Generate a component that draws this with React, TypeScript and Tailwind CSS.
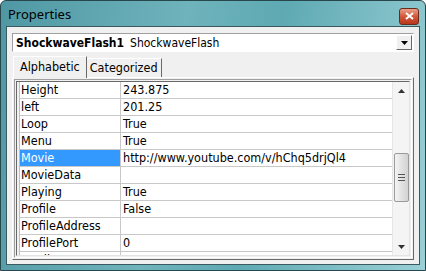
import React from "react";

const rows: [string, string][] = [
  ["Height", "243.875"],
  ["left", "201.25"],
  ["Loop", "True"],
  ["Menu", "True"],
  ["Movie", "http://www.youtube.com/v/hChq5drjQl4"],
  ["MovieData", ""],
  ["Playing", "True"],
  ["Profile", "False"],
  ["ProfileAddress", ""],
  ["ProfilePort", "0"],
  ["Quality", "1"],
];

export default function App() {
  const font = { fontFamily: '"DejaVu Sans Condensed", "DejaVu Sans", Verdana, sans-serif' };
  return (
    <div
      className="w-[426px] h-[271px] overflow-hidden rounded-t-[6px] border border-[#27474d] bg-[linear-gradient(100deg,#4f98a3_0%,#6fb3bc_40%,#5ea9b3_60%,#9ad0d6_100%)] flex flex-col"
      style={font}
    >
      {/* Title bar */}
      <div className="h-[25px] flex items-center justify-between pl-[7px] pr-[6px] shrink-0">
        <span className="text-[13px] text-black mt-[2px]" style={{ fontFamily: '"Noto Sans", "DejaVu Sans", sans-serif' }}>
          Properties
        </span>
        <div className="w-[20px] h-[17px] mt-[5px] rounded-[3px] border border-[#6b2a1c] bg-[linear-gradient(#e9a08a,#d2583a_50%,#b8361c)] flex items-center justify-center">
          <svg width="9" height="8" viewBox="0 0 9 8">
            <path d="M1 1 L8 7 M8 1 L1 7" stroke="#fff" strokeWidth="2" />
          </svg>
        </div>
      </div>
      {/* Client */}
      <div className="mx-[5px] mb-[5px] flex-1 border border-[#3a5a60] bg-[#f0f0f0] flex flex-col px-[5px] pt-[6px] pb-[4px] min-h-0">
        {/* Combo */}
        <div className="h-[19px] border-t border-l border-[#a0a0a0] border-b border-r border-b-white border-r-white bg-white flex items-center shrink-0">
          <div className="flex-1 flex items-center pl-[3px] text-[12px] leading-none">
            <span className="font-bold">ShockwaveFlash1</span>
            <span className="ml-[6px]">ShockwaveFlash</span>
          </div>
          <div className="w-[16px] h-[15px] mr-[1px] bg-[#f0f0f0] border border-t-white border-l-white border-b-[#696969] border-r-[#696969] flex items-center justify-center">
            <svg width="7" height="4" viewBox="0 0 7 4">
              <path d="M0 0 H7 L3.5 4 Z" fill="#000" />
            </svg>
          </div>
        </div>
        {/* Tabs */}
        <div className="flex items-end h-[24px] pl-[1px] shrink-0 mt-[1px]">
          <div className="h-[22px] px-[6px] flex items-center text-[12.5px] border-t border-l border-white border-r border-r-[#696969] bg-[#f0f0f0] relative z-10 -mb-[1px]">
            Alphabetic
          </div>
          <div className="h-[19px] px-[3px] flex items-center text-[12.5px] border-t border-white border-r border-r-[#696969] bg-[#f0f0f0]">
            Categorized
          </div>
        </div>
        {/* Grid */}
        <div className="flex-1 min-h-0 border-t border-l border-white border-r border-b border-r-[#696969] border-b-[#696969] p-[1px]">
          <div className="h-full border border-[#a0a0a0] border-b-white border-r-white p-[1px]">
            <div className="h-full border border-[#696969] border-b-[#e3e3e3] border-r-[#e3e3e3] flex bg-white overflow-hidden">
              <div className="flex-1 overflow-hidden flex">
                <div className="w-[3px] bg-[#f0f0f0] border-r border-[#c0c0c0]" />
                <div className="flex-1">
                  {rows.map(([n, v]) => (
                    <div key={n} className="h-[17px] flex border-b border-[#c8c8c8] text-[12.5px] leading-none">
                      <div
                        className={
                          "w-[101px] border-r border-[#c8c8c8] flex items-center pl-[1px] " +
                          (n === "Movie" ? "bg-[#3399ff] text-white" : "text-black")
                        }
                      >
                        {n}
                      </div>
                      <div className="flex-1 flex items-center pl-[2px] text-black">{v}</div>
                    </div>
                  ))}
                </div>
              </div>
              {/* Scrollbar */}
              <div className="w-[17px] bg-[#f4f4f4] border-l border-[#e6e6e6] flex flex-col items-center">
                <div className="h-[17px] w-full flex items-center justify-center">
                  <svg width="7" height="4" viewBox="0 0 7 4">
                    <path d="M0 4 H7 L3.5 0 Z" fill="#333" />
                  </svg>
                </div>
                <div className="h-[54px]" />
                <div className="w-[15px] h-[49px] rounded-[2px] border border-[#9a9a9a] bg-[linear-gradient(90deg,#f4f4f4,#e2e2e2_50%,#d2d2d2)] flex flex-col items-center justify-center gap-[2px]">
                  <div className="w-[7px] h-[1px] bg-[#555]" />
                  <div className="w-[7px] h-[1px] bg-[#555]" />
                  <div className="w-[7px] h-[1px] bg-[#555]" />
                </div>
                <div className="flex-1" />
                <div className="h-[17px] w-full flex items-center justify-center">
                  <svg width="7" height="4" viewBox="0 0 7 4">
                    <path d="M0 0 H7 L3.5 4 Z" fill="#333" />
                  </svg>
                </div>
              </div>
            </div>
          </div>
        </div>
      </div>
    </div>
  );
}
